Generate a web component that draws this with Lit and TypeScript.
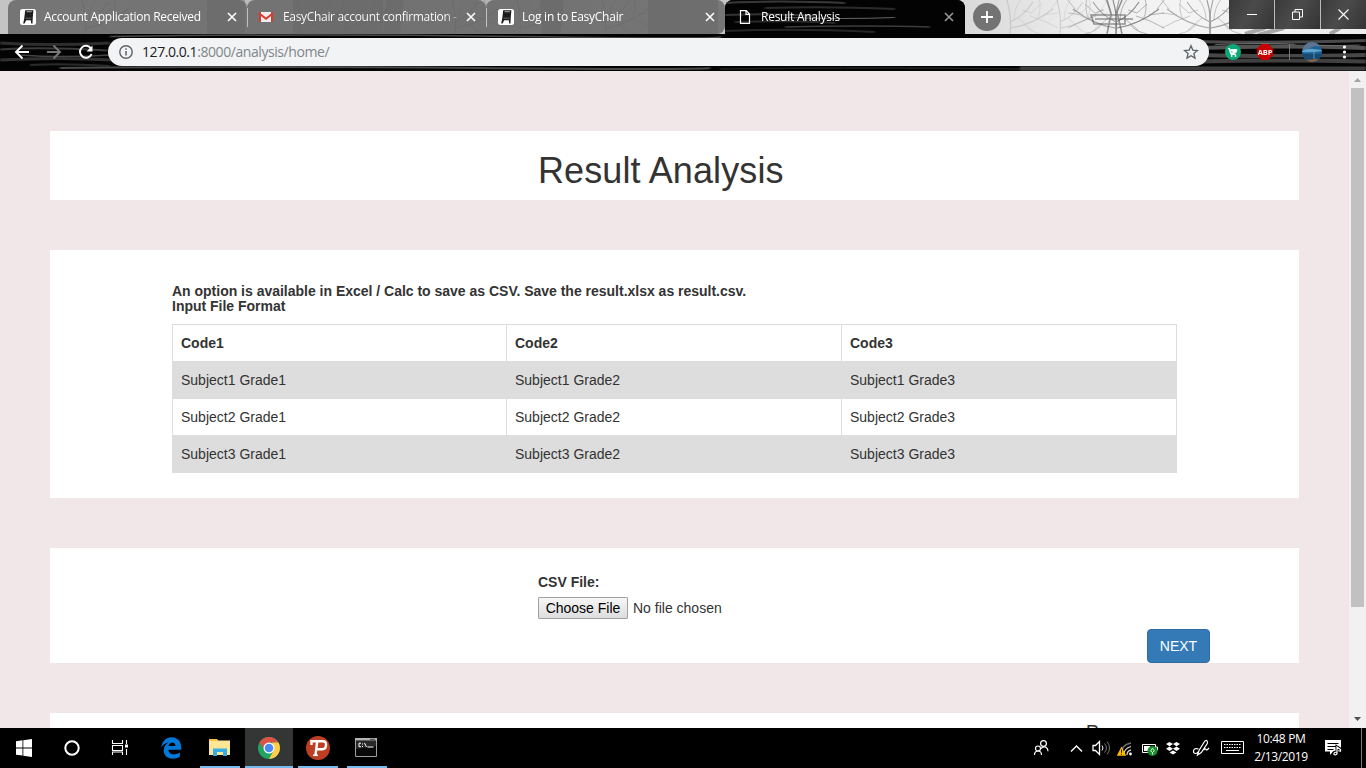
import { LitElement, html, svg, css } from "lit";
import { customElement } from "lit/decorators.js";

const icon = (w: number, h: number, body: unknown, cls = "") =>
  html`<svg class=${cls} width=${w} height=${h} viewBox="0 0 ${w} ${h}" fill="none">${body}</svg>`;

const chair = icon(16, 16, svg`
  <rect width="16" height="16" rx="2.5" fill="#fff"/>
  <path d="M5.2 1.300h8.200l-.7 8-.2 5.200h-1.300l-.4-3.200H6.200L4.600 14.500H3.200L4.300 9z" fill="#1d1d1d"/>
  <path d="M6.600 2.700h5.200" stroke="#bbb" stroke-width=".9"/><path d="M5.600 9.200h5.800" stroke="#888" stroke-width=".7"/>`);
const gmail = icon(14, 12, svg`
  <path d="M0 1h14v10H0z" fill="#eee"/><path d="M0 1l7 5.6L14 1v2.4L7 9 0 3.4z" fill="#d93a2f"/>
  <path d="M0 1h2v10H0zM12 1h2v10h-2z" fill="#d93a2f"/>`);
const page = icon(12, 14, svg`<path d="M1.500.700h5.800l3.200 3.300V13.300h-9zM7 .700v3.600h3.500" stroke="#fff" stroke-width="1.200"/>`);

/* Bare winter branches, mirrored around a vertical axis. */
const branch = svg`
  <path d="M0 34Q2 18-3 0M0 22Q14 16 23 2M1 28Q22 25 43 9" stroke-width="1.1"/>
  <path d="M4 20Q4 8 12-2M20 16Q34 20 48 28M27 20Q32 9 29-2M8 18L22 30M33 15L48 13M12 10L21 13 31 4M14 24Q18 31 31 34M41 9L49-1" stroke-width=".6"/>`;
const trees = html`<svg class="art" width="1366" height="34" viewBox="0 0 1366 34" fill="none">
  <defs>
    <linearGradient id="sky"><stop stop-color="#c4c4c4"/><stop offset=".35" stop-color="#b2b2b2"/><stop offset=".55" stop-color="#c8c8c8"/><stop offset=".72" stop-color="#dcdcdc"/><stop offset=".8" stop-color="#efefef"/><stop offset=".87" stop-color="#f4f4f4"/><stop offset="1" stop-color="#eee"/></linearGradient>
    <filter id="mist" x="-5%" y="-30%" width="110%" height="160%"><feGaussianBlur stdDeviation=".7"/></filter>
    <filter id="trunk"><feGaussianBlur stdDeviation="2"/></filter>
  </defs>
  <rect width="1366" height="34" fill="url(#sky)"/>
  <path d="M207-4h38v42h-38zM293-4h90v42h-90zM386-1h18l-4 36h-17zM540-4h24l-4 42h-18zM648-4h70v42h-70z" fill="#707070" opacity=".45"/>
  <g filter="url(#mist)">
    ${[85, 300, 345, 455, 520, 605].map((x) => svg`<g transform="translate(${x} 0)" stroke="#777" opacity=".45">${branch}</g>`)}
    ${[1010, 1060].map((x) => svg`<g transform="translate(${x} 0)" stroke="#999" opacity=".35">${branch}</g>`)}
    <g transform="translate(1116 0)" stroke="#666" opacity=".75">${branch}</g><g transform="translate(1116 0) scale(-1 1)" stroke="#777" opacity=".65">${branch}</g>
    <g transform="translate(1210 0)" stroke="#777" opacity=".7">${branch}</g><g transform="translate(1210 0) scale(-1 1)" stroke="#777" opacity=".6">${branch}</g>
    <path d="M1091 15h34v9h-31zM1095 19h38M1107 0l4 14-4 20M1122 0l-5 12 5 22" stroke="#555" stroke-width="1.6" opacity=".6"/>
    <path d="M1245 34l20-6M1258 35l26-7M1330 34l10-6" stroke="#777" stroke-width="4" opacity=".6"/>
  </g>
</svg>`;

/* Dark brushed wood: long, thin highlights over near-black. */
const streaks = (w: number, h: number, paths: [string, string, number][]) => html`<svg class="art" width=${w} height=${h} viewBox="0 0 ${w} ${h}" fill="none">
  <defs><filter id="soft" x="-2%" y="-20%" width="104%" height="140%"><feGaussianBlur stdDeviation="1 .5"/></filter></defs>
  <rect width=${w} height=${h} fill="#030303"/>
  <g filter="url(#soft)">${paths.map(([d, c, s]) => svg`<path d=${d} stroke=${c} stroke-width=${s}/>`)}</g>
</svg>`;
const tabStreaks = streaks(240, 34, [
  ["M0 3q50-3 120 0", "#383838", 2], ["M40 8q60-2 130 1", "#2c2c2c", 2], ["M0 15q50-2 90 1", "#333", 2],
  ["M60 17.500q60 2 110 0", "#666", 1], ["M10 22q60-2 100 1", "#2a2a2a", 2], ["M60 27q80-2 145 0", "#3c3c3c", 1.5],
  ["M0 31q70-3 150 1", "#262626", 2],
]);
const barStreaks = streaks(1366, 37, [
  ["M0 9q50 3 110 0", "#2e2e2e", 3], ["M0 15.500q40-3 108 1", "#3a3a3a", 2], ["M20 21q40 3 90 0", "#444", 1.5],
  ["M0 26q60-3 112 0", "#333", 3], ["M30 31q30-2 80 1", "#2b2b2b", 2],
  ["M110 2.500q200-3 410 0t200 0", "#4a4a4a", 1.5], ["M60 34q200-2 420 0t230 0", "#484848", 2], ["M720 35q150-2 300 0", "#222", 1.5],
  ["M1020 34.500h346", "#3e3e3e", 4],
  ["M1195 7.500q60 2 171-1", "#484848", 3], ["M1200 14q80-3 166 0", "#525252", 4], ["M1200 21q70 2 166 0", "#474747", 4],
  ["M1200 27.500q80-2 166 0", "#414141", 4], ["M1215 10.500q60-2 80 0M1310 11q30 1 50 0", "#7c7c7c", .8], ["M1270 24h80", "#111", 1.5],
]);

const close = (c = "#fff") => icon(10, 10, svg`<path d="M1 1l8 8M9 1L1 9" stroke=${c} stroke-width="1.6"/>`, "x");

@customElement("browser-bar")
class BrowserBar extends LitElement {
  static styles = css`
    :host { display: block; height: 71px; flex: none; font: 12px "Open Sans", sans-serif; color: #fff; }
    svg { display: block; flex: none; }
    .art { position: absolute; left: 0; top: 0; z-index: 0; }
    .strip { position: relative; height: 34px; display: flex; padding-left: 8px; overflow: hidden; }
    .tab { position: relative; z-index: 1; width: 239px; height: 34px; box-sizing: border-box; display: flex; align-items: center; padding: 0 10px 0 12px; background: rgba(98, 98, 98, .8); border-radius: 8px 8px 0 0; }
    .tab.mid::before { content: ""; position: absolute; left: 0; top: 8px; width: 1px; height: 19px; background: #c0c0c0; }
    .tab.active { width: 240px; overflow: hidden; background: #000; padding: 0 11px 0 14px; }
    .tab.last { border-radius: 8px 8px 8px 0; }
    .label { position: relative; margin-left: 8px; flex: 1; white-space: nowrap; line-height: 18px; letter-spacing: -.25px; }
    .active .label { margin-left: 10px; }
    .fade { margin-left: 10px; letter-spacing: -.32px; background: linear-gradient(90deg, #fff 162px, rgba(255, 255, 255, .15) 178px); -webkit-background-clip: text; background-clip: text; color: transparent; }
    .tab > svg:not(.art) { position: relative; }
    .plus { position: relative; width: 28px; height: 28px; margin: 3px 0 0 8px; border-radius: 50%; background: #737373; display: grid; place-items: center; }
    .controls { position: relative; margin-left: auto; height: 29px; display: flex; gap: 1px; background: #bbb; }
    .controls div { width: 45px; background: linear-gradient(120deg, #393939, #4b4b4b 45%, #343434); display: grid; place-items: center; }
    .tools { position: relative; height: 37px; display: flex; align-items: center; overflow: hidden; }
    .nav { position: relative; width: 108px; height: 37px; }
    .url { position: relative; width: 1101px; height: 28px; margin-top: -1px; border-radius: 14px; background: #f1f3f4; box-sizing: border-box; padding: 0 10px 0 11px; display: flex; align-items: center; color: #80868b; font-size: 14px; }
    .addr { margin-left: 9px; flex: 1; letter-spacing: -.43px; line-height: 20px; }
    .addr b { font-weight: 400; color: #202124; }
    .ext { position: relative; }
    .abp { font: bold 7.5px "Open Sans", sans-serif; letter-spacing: -.2px; }
  `;
  render() {
    return html`
      <div class="strip">${trees}
        <div class="tab">${chair}<span class="label">Account Application Received</span>${close()}</div>
        <div class="tab mid">${gmail}<span class="label fade">EasyChair account confirmation -</span>${close()}</div>
        <div class="tab mid last">${chair}<span class="label">Log in to EasyChair</span>${close()}</div>
        <div class="tab active">${tabStreaks}${page}<span class="label">Result Analysis</span>${close("#999")}</div>
        <div class="plus">${icon(12, 12, svg`<path d="M6 0v12M0 6h12" stroke="#fff" stroke-width="1.8"/>`)}</div>
        <div class="controls">
          <div>${icon(10, 10, svg`<path d="M0 4.500h10" stroke="#fff"/>`)}</div>
          <div>${icon(11, 11, svg`<path d="M.5 3h7v7.500h-7zM3 3V.5h7.500V8H7.500" stroke="#fff"/>`)}</div>
          <div>${icon(11, 11, svg`<path d="M.5.5l10 10M10.500.5l-10 10" stroke="#fff" stroke-width="1.100"/>`)}</div>
        </div>
      </div>
      <div class="tools">${barStreaks}
        ${icon(108, 37, svg`
          <path d="M29 18H16M22.500 11.500L16 18l6.500 6.500" stroke="#fff" stroke-width="1.900"/>
          <path d="M47 18h13M53.500 11.500L60 18l-6.500 6.500" stroke="#777" stroke-width="1.900"/>
          <path d="M91 14.500A6 6 0 1 0 91.600 20" stroke="#fff" stroke-width="2"/><path d="M92.500 11.500v6h-6z" fill="#fff"/>`, "nav")}
        <div class="url">
          ${icon(14, 14, svg`<circle cx="7" cy="7" r="6.200" stroke="#5f6368" stroke-width="1.400"/><path d="M7 6v4.500M7 3.300v1.500" stroke="#5f6368" stroke-width="1.500"/>`)}
          <span class="addr"><b>127.0.0.1</b>:8000/analysis/home/</span>
          ${icon(16, 16, svg`<path d="M8 1.800l1.800 4.300 4.600.4-3.500 3 1.100 4.600L8 11.700l-4 2.400 1.100-4.600-3.500-3 4.600-.4z" stroke="#5f6368" stroke-width="1.300"/>`)}
        </div>
        ${icon(157, 37, svg`
          <circle cx="24" cy="18" r="8" fill="#0ca678"/>
          <path d="M19 14.500h1.500l1.600 6h5M21.500 15.500H28l-1 3.300h-4.700z" stroke="#fff" fill="#fff" stroke-width=".8"/><path d="M20 14.500l1.800 6" stroke="#fff" stroke-width=".8"/><circle cx="22.700" cy="22" r=".9" fill="#fff"/><circle cx="26.500" cy="22" r=".9" fill="#fff"/>
          <path d="M52.700 10h6.600l4.700 4.700v6.600L59.300 26h-6.600L48 21.300v-6.600z" fill="#c80000"/>
          <text class="abp" x="56" y="20.800" text-anchor="middle" fill="#fff">ABP</text>
          <path d="M80.500 10v16" stroke="#777"/>
          <clipPath id="av"><circle cx="103" cy="18" r="10"/></clipPath>
          <g clip-path="url(#av)"><path d="M93 8h20v20H93z" fill="#1d6296"/><path d="M93 8h20v5l-7-1-13 5z" fill="#5c7490"/><path d="M93 17q6-3 11-2l9 1v1q-10 2-20 1z" fill="#5fa5cb"/><path d="M93 20h20v8H93z" fill="#174a73"/><path d="M97 26l12-1v3H97z" fill="#94633f"/><path d="M105 17v8" stroke="#8ab" stroke-width=".7"/></g>
          <g fill="#fff"><circle cx="135.500" cy="13" r="1.600"/><circle cx="135.500" cy="18" r="1.600"/><circle cx="135.500" cy="23" r="1.600"/></g>`, "ext")}
      </div>`;
  }
}

@customElement("result-page")
class ResultPage extends LitElement {
  static styles = css`
    :host { display: flex; height: 657px; background: #f1e7e8; overflow: hidden; color: #333; font: 14px/20px "Liberation Sans", Arial, sans-serif; }
    .content { width: 1349px; box-sizing: border-box; padding: 60px 50px 0; display: flex; flex-direction: column; gap: 50px; }
    .card { background: #fff; flex: none; box-sizing: border-box; }
    .title { height: 69px; padding: 20px 0 0 488px; }
    h1 { margin: 0; font-size: 36px; line-height: 39px; font-weight: 400; letter-spacing: .1px; }
    .format { height: 248px; padding: 34px 122px 0; }
    .note { font-weight: 700; line-height: 15px; margin: 0 0 10px; letter-spacing: -.01px; }
    table { width: 1005px; border-collapse: collapse; table-layout: fixed; }
    th, td { text-align: left; padding: 8px; height: 20px; border: 1px solid #ddd; }
    th:first-child { width: 317px; }
    tr:nth-child(even) { background: #ddd; }
    .upload { height: 115px; padding: 24px 89px 0 488px; display: flex; flex-direction: column; }
    label { font-weight: 700; }
    .file { display: flex; gap: 5px; margin-top: 5px; line-height: 22px; }
    .choose { box-sizing: border-box; width: 90px; height: 22px; padding: 0; border: 1px solid #a0a0a0; border-radius: 1px; background: linear-gradient(#f6f6f6, #ddd); color: #000; font: 14px/20px "Liberation Sans", Arial, sans-serif; }
    .next { align-self: flex-end; margin-top: 10px; width: 63px; height: 34px; padding: 0; border: 1px solid #2e6da4; border-radius: 4px; background: #337ab7; color: #fff; font: 14px/20px "Liberation Sans", Arial, sans-serif; flex: none; }
    .more { height: 100px; padding: 9px 0 0 1036px; font-size: 18px; }
    .scroll { width: 17px; display: flex; flex-direction: column; align-items: center; background: #f1f1f1; }
    .thumb { width: 13px; height: 519px; background: #c1c1c1; }
    .scroll svg { display: block; }
    .down { margin-top: auto; }
  `;
  render() {
    return html`
      <div class="content">
        <div class="card title"><h1>Result Analysis</h1></div>
        <div class="card format">
          <p class="note">An option is available in Excel / Calc to save as CSV. Save the result.xlsx as result.csv.<br>Input File Format</p>
          <table><tbody>
            <tr>${[1, 2, 3].map((c) => html`<th>Code${c}</th>`)}</tr>
            ${[1, 2, 3].map((s) => html`<tr>${[1, 2, 3].map((g) => html`<td>Subject${s} Grade${g}</td>`)}</tr>`)}
          </tbody></table>
        </div>
        <div class="card upload">
          <label>CSV File:</label>
          <div class="file"><button class="choose">Choose File</button><span>No file chosen</span></div>
          <button class="next">NEXT</button>
        </div>
        <div class="card more">R</div>
      </div>
      <div class="scroll">
        ${icon(17, 17, svg`<path d="M5 11l3.500-4 3.500 4z" fill="#a3a3a3"/>`)}
        <div class="thumb"></div>
        ${icon(17, 17, svg`<path d="M5 6h7l-3.500 4z" fill="#505050"/>`, "down")}
      </div>`;
  }
}

@customElement("task-bar")
class TaskBar extends LitElement {
  static styles = css`
    :host { display: flex; height: 40px; background: #000; color: #fff; font: 12px/18px "Open Sans", sans-serif; }
    svg { display: block; flex: none; }
    .clock { width: 62px; margin: 0 5px 0 0; padding-top: 2px; text-align: center; letter-spacing: -.35px; white-space: nowrap; }
    .tray { margin-left: auto; }
  `;
  render() {
    return html`
      ${icon(400, 40, svg`
        <path d="M16 13.300l6.500-1v7.200H16zM23.300 12.200L32 11v8.500h-8.700zM16 20.400h6.500v7.200L16 26.700zM23.300 20.400H32V29l-8.700-1.200z" fill="#fff"/>
        <circle cx="72" cy="20" r="6.700" stroke="#fff" stroke-width="2"/>
        <path d="M112.500 12v3.500h10V12M112.500 27v-3h10v3M112.500 17.500h10v5h-10zM126.500 12v4M126.500 21v6" stroke="#fff" stroke-width="1.100"/><path d="M125 16.500h3v3h-3z" fill="#fff"/>
        <path d="M161.300 19.300C162 13 166.300 9.200 171.500 9.200c6 0 9.700 4.300 9.700 10v2.600h-12.800c.4 5.300 7.300 5.500 11.500 2.700v4.300c-6.300 3.700-16.200 2.300-16.200-6.300 0-4 2-6.700 5.200-8.300-3.500.5-6 2.500-7.600 5.100zM168.500 18h7c0-4.800-6-4.700-7 0z" fill="#0078d7"/>
        <path d="M209 11h8l1 1.500h12V27h-21z" fill="#ffe694"/><path d="M209 11h8v2h-8z" fill="#f7c744"/><path d="M213 28v-7.500h14V28h-4v-4h-6v4z" fill="#35aee5"/>
        <path d="M245 0h48v40h-48z" fill="#343535"/>
        <circle cx="269" cy="20" r="11" fill="#1fa463"/><path d="M259.500 14.500a11 11 0 0 1 19 0H269l-4 7.500z" fill="#de5246"/><path d="M278.500 14.500A11 11 0 0 1 269 31l5-9-2-7.500z" fill="#ffcd46"/><circle cx="269" cy="20" r="5.500" fill="#fff"/><circle cx="269" cy="20" r="4.300" fill="#4a8af4"/>
        <circle cx="318" cy="20" r="12" fill="#be3e23"/><path d="M311.500 17v-3.700h11.500q3.300 0 3 4t-4.200 4h-5.500M317.200 13.500l-1.700 13.500" stroke="#fff" stroke-width="2.400"/><path d="M313 27.300h5" stroke="#fff" stroke-width="1.500"/>
        <path d="M355.500 10.500h21v18h-21z" fill="#080808" stroke="#a0a0a0"/><path d="M355 10h22v2.500h-22z" fill="#b5b5b5"/><path d="M370 11.300h5" stroke="#444"/><path d="M356 21l20-3v-5h-20z" fill="#292929"/><path d="M361 15.200h-2v3.500h2M362.500 15.500v1M362.500 18v1M364.500 15l2 4M367.500 19h6" stroke="#fff" stroke-width="1"/>
        <path d="M200 38h40v2h-40zM245 38h48v2h-48zM298 38h40v2h-40zM347 38h40v2h-40z" fill="#76b9ed"/>`)}
      ${icon(220, 40, svg`
        <g stroke="#fff" stroke-width="1.200"><circle cx="13.500" cy="15.500" r="2.900"/><path d="M11 20.500q2.500-2.500 5-1.200 2 1.200 2 4"/><circle cx="8" cy="20.500" r="2.500"/><path d="M4.500 27q0-4 3.500-4t3.500 4"/></g>
        <g stroke="#fff" stroke-width="1.300"><path d="M41 23.500l5.500-5.500 5.500 5.500" stroke-width="1.400"/>
        <path d="M63 17.500h2.500l4-4v13l-4-4H63z"/></g>
        <path d="M72 17.500q2 2.500 0 5" stroke="#fff"/><path d="M74.500 15.500q4 4.500 0 9M77 13.500q5 6.500 0 13" stroke="#777"/>
        <path d="M91 26q0-9 10-11" stroke="#777" stroke-width="1.300"/><path d="M94 26.500q0-6 7-8M97 27q0-4 4-5" stroke="#ccc" stroke-width="1.300"/><circle cx="100.500" cy="26" r="1.400" fill="#fff"/><path d="M91.500 18.500l4.700 9.200h-9.400z" fill="#ffb900"/><path d="M91.500 21.500v3.300M91.500 25.700v1.100" stroke="#222"/>
        <path d="M112.500 16.500h13v8h-13zM125.500 19h2v3h-2" stroke="#fff"/><path d="M114 18h6v5h-6z" fill="#fff"/><circle cx="122.500" cy="23" r="5" fill="#15912a"/><path d="M122.500 20.200l1.800 2.500-1.800 2-1.800-2zM122.500 24v2.500" stroke="#fff" stroke-width=".9"/>
        <path d="M139.500 14l3.500 2-3.500 2.200-3.500-2.200zM146.500 14l3.500 2-3.500 2.200L143 16zM139.500 18.600l3.500 2.100-3.500 2.200-3.500-2.200zM146.500 18.600l3.500 2.100-3.500 2.200-3.500-2.200zM143 22.500l3.500 2-3.500 2-3.500-2z" fill="#fff"/>
        <path d="M168.500 21q-4.500-1.500-5 2c-.3 3.500 3.500 3 5 .5M167.500 27l1.500-4.500 5.500-9q1.500-1.700 2.500-.7t.3 2.700l-6 9zM173.500 22q2-2 2.500-.5t3-1.500" stroke="#fff" stroke-width="1.200"/>
        <path d="M191.500 13.500h22v12h-22z" stroke="#fff"/><path d="M194 16.500h17M194 19.500h17" stroke="#fff" stroke-width="1.200" stroke-dasharray="1.500 1"/><path d="M196 22.500h13" stroke="#fff"/>`, "tray")}
      <div class="clock">10:48 PM<br>2/13/2019</div>
      ${icon(49, 40, svg`
        <path d="M8 12h16v11.500h-8L13 27v-3.500H8z" fill="#fff"/><path d="M10.500 15.500h11M10.500 18.500h11M10.500 21.500h6" stroke="#000"/><path d="M20 26v-7l4 2.500M20 24q-4 0-3 2.500 2.500 1 3-1" stroke="#000" stroke-width="3"/><path d="M20 26v-7l3.500 2.500v2M20 24q-3.500 0-3 2.500 2.500 1 3-1" stroke="#fff" stroke-width="1.200"/>
        <path d="M44.500 0v40" stroke="#777"/>`)}`;
  }
}

@customElement("app-root")
class AppRoot extends LitElement {
  static styles = css`:host { display: flex; flex-direction: column; width: 1366px; height: 768px; overflow: hidden; }`;
  render() {
    return html`<browser-bar></browser-bar><result-page></result-page><task-bar></task-bar>`;
  }
}
